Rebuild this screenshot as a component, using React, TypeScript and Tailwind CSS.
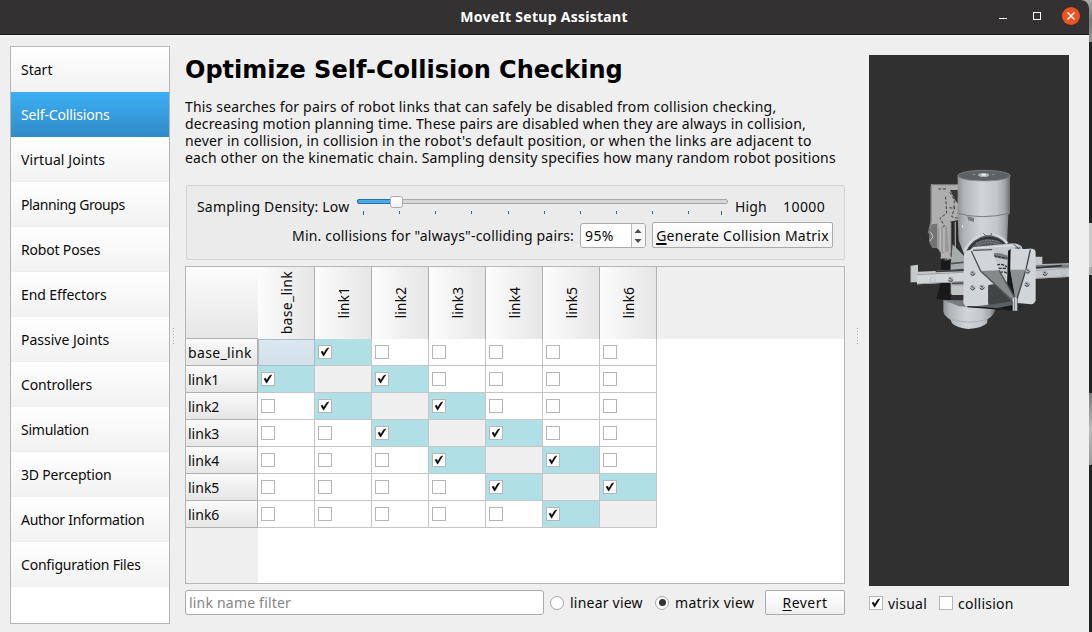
import React from "react";

const nav = [
  { label: "Start", tracking: "" },
  { label: "Self-Collisions", tracking: "tracking-[-0.15px]" },
  { label: "Virtual Joints", tracking: "tracking-[0.08px]" },
  { label: "Planning Groups", tracking: "tracking-[-0.4px]" },
  { label: "Robot Poses", tracking: "tracking-[-0.18px]" },
  { label: "End Effectors", tracking: "tracking-[-0.08px]" },
  { label: "Passive Joints", tracking: "" },
  { label: "Controllers", tracking: "tracking-[-0.14px]" },
  { label: "Simulation", tracking: "tracking-[-0.25px]" },
  { label: "3D Perception", tracking: "tracking-[-0.18px]" },
  { label: "Author Information", tracking: "tracking-[-0.28px]" },
  { label: "Configuration Files", tracking: "tracking-[-0.2px]" },
];
const links = ["base_link", "link1", "link2", "link3", "link4", "link5", "link6"];
const ticks = [6, 42, 78, 114, 151, 187, 223, 259, 295, 331, 364];
const screws = [[203, 325], [203, 368], [231, 367], [137, 343], [368, 318], [366, 358], [420, 325]];

function Check({ on }: { on?: boolean }) {
  return (
    <span className="flex size-[14px] shrink-0 items-center justify-center border border-[#b6b6b6] bg-white">
      {on && (
        <svg width="12" height="12" viewBox="0 0 12 12">
          <path d="M2 5.8L4.6 10.2L9.8 1.8L7.6 2.8L4.7 7.6L3.7 5.2Z" fill="#000" stroke="#000" strokeWidth="0.5" />
        </svg>
      )}
    </span>
  );
}

function Radio({ on }: { on?: boolean }) {
  return (
    <span className="flex size-[14px] shrink-0 items-center justify-center rounded-full border border-[#a6a6a6] bg-white">
      {on && <span className="size-[7px] rounded-full bg-[#333]" />}
    </span>
  );
}

function Grip() {
  return (
    <svg width="2" height="17" className="mt-[293px] shrink-0">
      {[0, 3, 6, 9, 12, 15].map((y) => <rect key={y} x="0" y={y} width="1" height="1" fill="#aaa" />)}
    </svg>
  );
}

function Robot() {
  return (
    <svg width="200" height="531" viewBox="869 55 200 531" className="block">
      <defs>
        <linearGradient id="cyl" x1="0" x2="1" y1="0" y2="0">
          <stop offset="0" stopColor="#8e9193" />
          <stop offset="0.12" stopColor="#b0b4b6" />
          <stop offset="0.45" stopColor="#d0d5d7" />
          <stop offset="0.75" stopColor="#c3c7c9" />
          <stop offset="0.9" stopColor="#a2a6a8" />
          <stop offset="1" stopColor="#6b6e70" />
        </linearGradient>
      </defs>
      <g transform="translate(905 165) scale(0.33333)">
        {/* rear bracket and joint housing */}
        <path d="M78 57H160V170L140 200V282L108 280L106 250L82 248L72 215L78 160Z" fill="#aeaeae" />
        <path d="M78 62V170L70 205M80 59H158" fill="none" stroke="#777" strokeWidth="4" />
        <path d="M135 75H160V118L150 105Z" fill="#363636" />
        <path d="M100 72H128M135 82L148 105L147 130L133 128M122 95L125 145L105 160L118 182L100 195M150 125L140 155L158 160" fill="none" stroke="#404040" strokeWidth="3" strokeDasharray="9 5" />
        <path d="M80 178L97 176V248L82 250L72 230V205Z" fill="#737373" />
        <path d="M76 200L84 215L75 228" fill="none" stroke="#ccc" strokeWidth="3" />
        <path d="M97 190L126 182L132 258L112 265L97 250Z" fill="#999" />
        <path d="M106 188V260M117 188V262" stroke="#b8b8b8" strokeWidth="5" />
        <path d="M135 170L160 165V275H137Z" fill="#282828" />
        <path d="M137 172V265M151 170V268" stroke="#999" strokeWidth="4" />
        <path d="M107 280L122 266L130 282L116 288" fill="none" stroke="#bbb" strokeWidth="4" strokeDasharray="6 3" />
        <path d="M108 284L137 288V405L95 402L108 345Z" fill="#191919" />
        <path d="M143 238L178 274V387H137V300Z" fill="#a8abac" />
        <path d="M136 296L176 292M140 355H175" stroke="#555" strokeWidth="5" />
        <path d="M140 362V390H178V362Z" fill="#c1c5c6" />

        {/* upper and lower cylinders */}
        <path d="M158 35V150L161 225L178 270L305 262L310 150L315 145V35Z" fill="url(#cyl)" />
        <path d="M158 145Q230 165 313 145" stroke="#777c7e" strokeWidth="3" fill="none" />
        <ellipse cx="237" cy="32" rx="79" ry="16" fill="#5d6163" stroke="#8d9193" strokeWidth="2" />
        <ellipse cx="236" cy="30" rx="17" ry="6" fill="#aeb3b4" />
        <ellipse cx="236" cy="29" rx="8" ry="3" fill="#eee" />
        <path d="M204 27L210 30M262 30L268 27" stroke="#989c9e" strokeWidth="3" />
        <path d="M187 154L207 159V171L190 166Z" fill="#777b7d" />
        <path d="M173 180V188" stroke="#eee" strokeWidth="3" />
        <path d="M115 405Q187 420 270 412V438Q262 456 248 462L246 475Q230 490 190 492Q155 489 141 475L137 465Q120 453 115 440Z" fill="url(#cyl)" />
        <path d="M115 405L175 406L195 426L163 424Z" fill="#777b7d" />
        <path d="M117 447Q128 459 141 464Q195 479 248 463" stroke="#9da1a2" strokeWidth="2" fill="none" />

        {/* wrist dome */}
        <path d="M178 258Q197 214 244 206Q288 204 308 238L300 255L184 270Z" fill="#55595b" />
        <path d="M178 260Q198 216 243 207Q285 206 307 235" fill="none" stroke="#d1d5d7" strokeWidth="8" />
        <path d="M188 258Q209 222 247 218Q280 219 297 236" fill="none" stroke="#303436" strokeWidth="6" />
        <path d="M213 236Q245 218 284 232M217 242Q245 226 280 238" fill="none" stroke="#888d8f" strokeWidth="3" strokeDasharray="7 3" />
        <path d="M235 205L244 214L258 212L259 204" fill="none" stroke="#5d6163" strokeWidth="3" />

        {/* horizontal rail */}
        <path d="M17 302L39 299V320L90 318L178 311V350L36 358V352H17Z" fill="#c5c9ca" />
        <path d="M36 329L176 323V350L36 358Z" fill="#d1d5d6" />
        <path d="M92 317L178 311V319L92 322Z" fill="#3c3f40" />
        <path d="M37 329L176 322M36 357L176 349M17 303V352" fill="none" stroke="#848889" strokeWidth="2" />
        <path d="M142 354H176" stroke="#555" strokeWidth="6" strokeDasharray="3 3" />
        <path d="M390 275H412V297L495 295V336L390 341Z" fill="#c4c8ca" />
        <path d="M392 300L495 298V308L392 310Z" fill="#777b7d" />
        <path d="M392 309L470 302" stroke="#2d3030" strokeWidth="5" />
        <path d="M392 317L495 309M392 340L495 334" stroke="#989c9e" strokeWidth="2" />

        {/* gripper carriage */}
        <path d="M193 257L205 246L325 235Q350 237 352 250V342L250 364L185 345Z" fill="#c3c8ca" />
        <path d="M194 258L207 249L319 242Q337 242 341 252" fill="none" stroke="#e3e7e8" strokeWidth="3" />
        <path d="M325 237L342 252M331 249H347" stroke="#494c4e" strokeWidth="3" />
        <path d="M177 270Q178 257 193 255L265 254L286 350L250 365V418L190 427Q177 424 175 411Z" fill="#d0d5d7" />
        <path d="M262 266Q285 260 308 272V285L266 277Z" fill="#777b7d" />
        <path d="M265 272Q290 278 308 279M275 300Q291 294 306 306M280 310H307M284 323Q296 317 306 325" stroke="#303334" strokeWidth="4" strokeDasharray="10 3" fill="none" />
        <path d="M250 360L276 356L326 410L328 429L250 419Z" fill="#404445" />
        <path d="M250 420L324 409L328 435L188 426Z" fill="#5d6163" />
        <path d="M187 425L327 435L353 423" fill="none" stroke="#181b1c" strokeWidth="4" />
        <path d="M277 429L325 420V434Z" fill="#151718" />

        {/* gripper fingers */}
        <path d="M309 257L317 253L382 251Q392 253 392 263V406Q389 417 379 418L336 414L318 393L306 368Z" fill="#d0d5d7" />
        <path d="M309 257L318 252L317 318L331 392L326 402L306 369Z" fill="#171919" />
        <path d="M317 254L378 251L361 314H316Z" fill="#d0d5d7" />
        <path d="M316 314H362L337 399H330Z" fill="#8b8f90" />
        <path d="M376 254L363 313L336 402" fill="none" stroke="#414547" strokeWidth="4" />
        <path d="M200 258L262 254L282 316L228 320Z" fill="#d0d5d7" />
        <path d="M228 318L282 316L329 398L325 413Z" fill="#85898a" />
        <path d="M199 258L227 318L324 409M282 316L330 399" fill="none" stroke="#4f5355" strokeWidth="4" />
        <path d="M204 256L262 254" stroke="#333" strokeWidth="3" />
        <path d="M323 401L331 396L337 402V437H323Z" fill="#d2d7d9" />
        <path d="M329 400V437M323 410V437M337 401V435" stroke="#484c4e" strokeWidth="2" />
        <path d="M339 422L355 421L339 431Z" fill="#272b2c" />

        {screws.map(([x, y]) => (
          <g key={`${x}-${y}`}>
            <circle cx={x} cy={y} r="7" fill="#b8bdbf" stroke="#9a9fa1" strokeWidth="2" />
            <path d={`M${x - 6} ${y + 2}Q${x} ${y + 11} ${x + 7} ${y + 1}M${x - 4} ${y - 4}L${x + 3} ${y}`} fill="none" stroke="#393d3e" strokeWidth="3" />
          </g>
        ))}
        <circle cx="83" cy="345" r="8" fill="none" stroke="#b0b4b6" strokeWidth="2" />
        <circle cx="477" cy="322" r="8" fill="none" stroke="#b0b4b6" strokeWidth="2" />
      </g>
    </svg>
  );
}

export default function App() {
  return (
    <div className="flex h-[632px] w-[1092px] overflow-hidden bg-[#aaa] font-['Noto_Sans',sans-serif] text-[14px] text-[#0b0b0b]">
      <div className="flex w-[1089px] shrink-0 flex-col rounded-tr-lg bg-[#efefef]">
        <header className="flex h-[35px] shrink-0 items-center rounded-tr-lg border-b border-[#1c1a1b] bg-[#333132] text-white">
          <h1 className="flex-1 pb-[2px] pl-[89px] text-center text-[14px] font-bold tracking-[0.27px]">MoveIt Setup Assistant</h1>
          <div className="flex w-[90px] items-center pb-[2px]">
            <span className="mt-[5px] h-px w-[8px] bg-white" />
            <span className="ml-[26px] size-[8px] border border-white" />
            <span className="ml-[21px] flex size-[18px] items-center justify-center rounded-full bg-[#e95420]">
              <svg width="8" height="8"><path d="M0.5 0.5L7.5 7.5M7.5 0.5L0.5 7.5" stroke="#fff" strokeWidth="1.5" /></svg>
            </span>
          </div>
        </header>
        <div className="flex min-h-0 flex-1">
          <nav className="mt-[11px] ml-[10px] h-[578px] w-[160px] shrink-0 border border-[#b6b6b6] bg-white">
            {nav.map((n, i) => (
              <div key={n.label} className={i === 1 ? "flex h-[45px] items-center bg-linear-to-b from-[#3daef6] to-[#308cc6] pl-[10px] text-white" : "flex h-[45px] items-center border-b border-[#eee] bg-linear-to-b from-white to-[#f2f2f2] pl-[10px]"}>
                <span className={n.tracking}>{n.label}</span>
              </div>
            ))}
          </nav>
          <div className="flex w-[15px] shrink-0 pl-[3px]"><Grip /></div>
          <main className="flex w-[660px] shrink-0 flex-col">
            <h2 className="mt-[19px] h-[32px] font-['DejaVu_Sans'] text-[24px] leading-[32px] font-bold whitespace-nowrap text-black">Optimize Self-Collision Checking</h2>
            <div className="mt-[12px] text-[14px] leading-[17px] whitespace-nowrap">
              <p className="tracking-[0.19px]">This searches for pairs of robot links that can safely be disabled from collision checking,</p>
              <p className="tracking-[0.16px]">decreasing motion planning time. These pairs are disabled when they are always in collision,</p>
              <p className="tracking-[0.2px]">never in collision, in collision in the robot's default position, or when the links are adjacent to</p>
              <p className="tracking-[0.17px]">each other on the kinematic chain. Sampling density specifies how many random robot positions</p>
            </div>
            <section className="mt-[19px] ml-px h-[75px] w-[659px] rounded-[2px] border border-[#d3d3d3] bg-[#ebebeb]">
              <div className="flex h-[35px] pt-[10px] pl-[10px] leading-[22px] whitespace-nowrap">
                <span className="w-[160px] tracking-[0.18px]">Sampling Density: Low</span>
                <svg width="372" height="24" className="shrink-0">
                  <defs>
                    <linearGradient id="thumb" x1="0" x2="0" y1="0" y2="1"><stop stopColor="#fff" /><stop offset="1" stopColor="#f1f1f1" /></linearGradient>
                  </defs>
                  <rect x="0.5" y="3.5" width="370" height="4" rx="1.5" fill="#d6d6d6" stroke="#a8a8a8" />
                  <rect x="0.5" y="3.5" width="38" height="4" rx="1.5" fill="#48a8e8" stroke="#25709f" />
                  <rect x="33.5" y="0.5" width="12" height="11" rx="2" fill="url(#thumb)" stroke="#aaa" />
                  {ticks.map((x, i) => <rect key={x} x={x} y="15" width="1" height={i === 0 || i === 10 ? 4 : 3} fill="#2b6d98" />)}
                </svg>
                <span className="ml-[6px] w-[48px] tracking-[0.15px]">High</span>
                <span className="tracking-[0.45px]">10000</span>
              </div>
              <div className="flex h-[27px] items-center pt-px pl-[105px] whitespace-nowrap">
                <span className="w-[288px] tracking-[0.18px]">Min. collisions for "always"-colliding pairs:</span>
                <div className="flex h-[25px] w-[66px] rounded-[3px] border border-[#ababab] bg-white">
                  <span className="w-[50px] pl-[4px] leading-[24px] tracking-[0.4px]">95%</span>
                  <svg width="14" height="23" className="rounded-r-[2px] border-l border-[#bcbcbc] bg-[#f6f6f6]"><path d="M2.5 9L6 5L9.5 9ZM2.5 15L6 19L9.5 15Z" fill="#4b4b4b" /></svg>
                </div>
                <button className="ml-[6px] h-[26px] w-[181px] rounded-[2px] border border-[#ababab] bg-linear-to-b from-white to-[#f0f0f0] tracking-[0.26px]"><u className="decoration-2 underline-offset-2">G</u>enerate Collision Matrix</button>
              </div>
            </section>
            <section className="mt-[6px] h-[318px] w-[660px] border border-[#b6b6b6] bg-white">
              <div className="flex h-[72px] bg-[#efefef]">
                <div className="w-[72px] shrink-0 border-b border-[#b1b1b1] bg-linear-to-b from-[#fcfcfc] to-[#e6e6e6]" />
                {links.map((l) => (
                  <div key={l} className="flex w-[57px] items-center justify-center border-r border-[#b1b1b1] bg-linear-to-r from-[#fcfcfc] to-[#e6e6e6]">
                    <span className={l === "base_link" ? "rotate-180 tracking-[0.3px] [writing-mode:vertical-rl]" : "rotate-180 [writing-mode:vertical-rl]"}>{l}</span>
                  </div>
                ))}
              </div>
              <div className="flex h-[244px]">
                <div className="w-[72px] shrink-0 bg-[#efefef]">
                  {links.map((l) => <div key={l} className={l === "base_link" ? "h-[27px] border-r border-b border-[#b1b1b1] bg-linear-to-b from-[#fafafa] to-[#e6e6e6] pl-[2px] leading-[27px] tracking-[0.35px]" : "h-[27px] border-r border-b border-[#b1b1b1] bg-linear-to-b from-[#fafafa] to-[#e6e6e6] pl-[2px] leading-[27px]"}>{l}</div>)}
                </div>
                <div>
                  {links.map((r, y) => (
                    <div key={r} className="flex h-[27px]">
                      {links.map((c, x) => {
                        const pair = Math.abs(x - y) === 1;
                        return (
                          <div key={c} className={x === y ? (y === 0 ? "w-[57px] border border-[#a6bbcd] bg-linear-to-b from-[#dce8f0] to-[#d3e0e9]" : "w-[57px] border-r border-b border-[#c5c5c5] bg-[#efefef]") : pair ? "w-[57px] border-r border-b border-[#c5c5c5] bg-[#b0e0e6] pt-[6px] pl-[3px]" : "w-[57px] border-r border-b border-[#c5c5c5] bg-white pt-[6px] pl-[3px]"}>
                            {x !== y && <Check on={pair} />}
                          </div>
                        );
                      })}
                    </div>
                  ))}
                </div>
              </div>
            </section>
            <div className="mt-[6px] flex h-[25px] w-[660px] items-center">
              <div className="h-[25px] w-[359px] rounded-[3px] border border-[#ababab] bg-white pl-[3px] leading-[23px] tracking-[0.2px] text-[#858585]">link name filter</div>
              <div className="ml-[6px] flex w-[105px] items-center gap-[6px] tracking-[0.22px] whitespace-nowrap"><Radio /><span>linear view</span></div>
              <div className="flex w-[110px] items-center gap-[6px] tracking-[0.32px] whitespace-nowrap"><Radio on /><span>matrix view</span></div>
              <button className="h-[25px] w-[80px] rounded-[2px] border border-[#ababab] bg-linear-to-b from-white to-[#f0f0f0] tracking-[0.5px]"><u className="underline-offset-2">R</u>evert</button>
            </div>
          </main>
          <div className="flex w-[24px] shrink-0 pl-[12px]"><Grip /></div>
          <aside className="mt-[20px] w-[200px]">
            <div className="bg-[#303030]"><Robot /></div>
            <div className="mt-[6px] flex h-[22px] items-center tracking-[0.25px] whitespace-nowrap"><Check on /><span className="ml-[5px] w-[51px]">visual</span><Check /><span className="ml-[5px]">collision</span></div>
          </aside>
        </div>
      </div>
      <div className="flex w-[3px] flex-col bg-[#222423]">
        <div className="h-[42px] bg-linear-to-b from-[#aaa] via-[#777] to-[#999]" />
        <div className="mt-[181px] h-[52px] border-b-8 border-[#aaa] bg-[#c9c9c9]" />
        <div className="mt-[118px] h-[72px] bg-linear-to-b from-[#777] via-[#bbb] to-[#999]" />
      </div>
    </div>
  );
}
